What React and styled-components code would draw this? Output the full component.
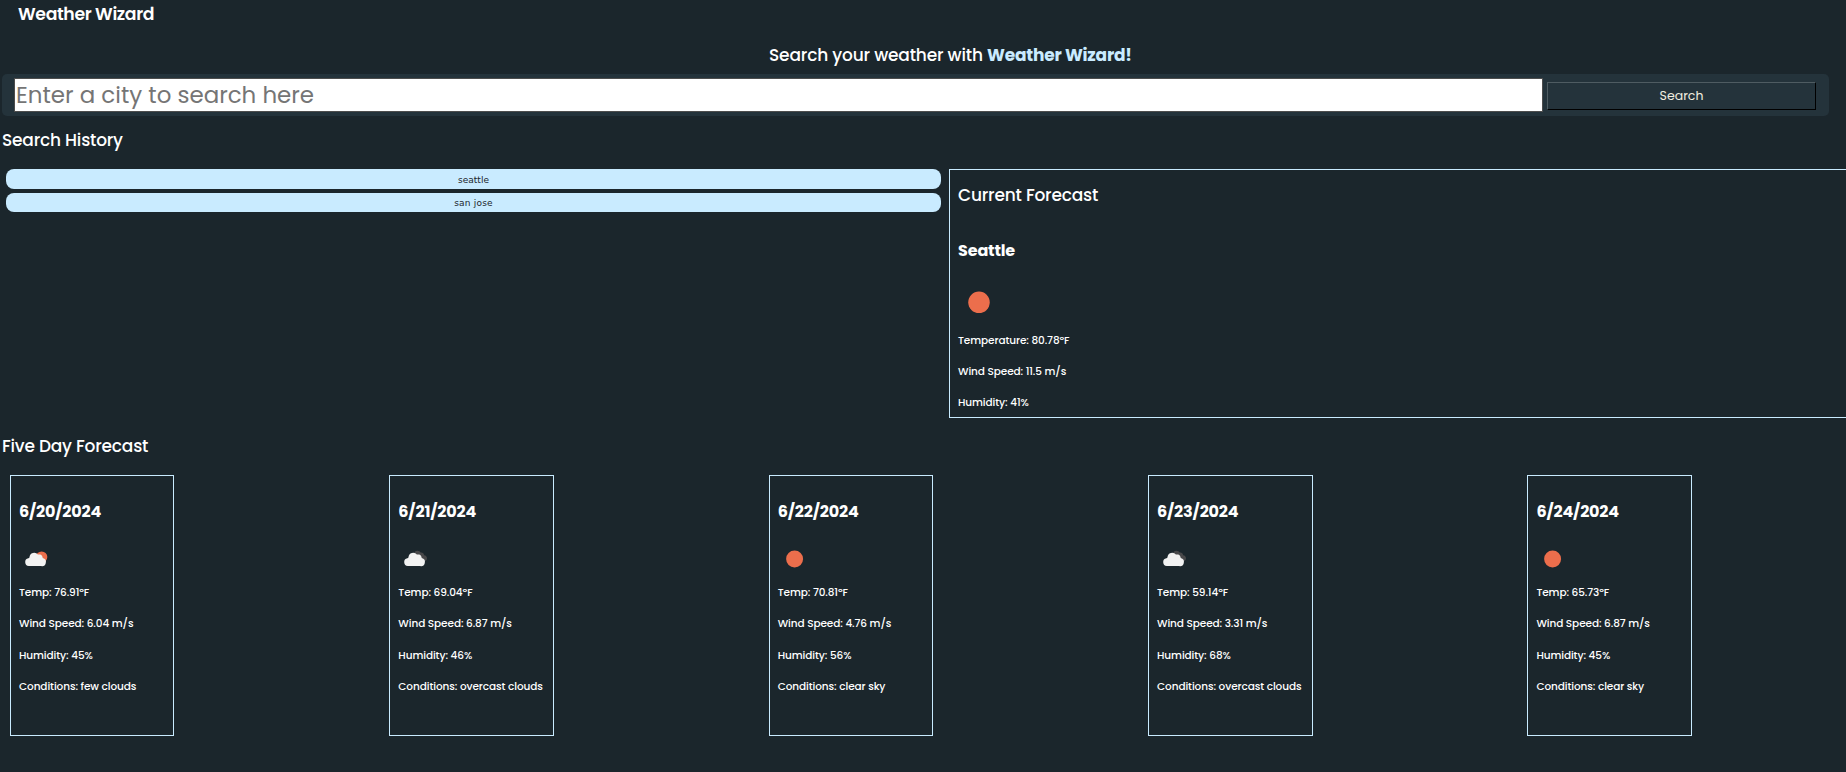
import React from "react";
import styled, { createGlobalStyle } from "styled-components";

const colors = {
  page: "#1b262c",
  bar: "#24333b",
  ice: "#c9ebff",
  text: "#ffffff",
};

const GlobalStyle = createGlobalStyle`
  * { box-sizing: border-box; }
  body {
    margin: 0;
    background: ${colors.page};
    color: ${colors.text};
    font-family: Poppins, Inter, "Open Sans", sans-serif;
    overflow: hidden;
  }
  h1, h2, h3, p { margin: 0; }
`;

const Viewport = styled.div`
  width: 100%;
  height: 772px;
  overflow: hidden;
`;

const Page = styled.main`
  width: 1898.75px;
  padding-left: 2px;
  display: flex;
  flex-direction: column;
`;

const Brand = styled.h1`
  padding-left: 16px;
  font-size: 17.3px;
  font-weight: 600;
  line-height: 28px;
  letter-spacing: -0.36px;
`;

const Tagline = styled.h2`
  margin-top: 13px;
  text-align: center;
  font-size: 17px;
  font-weight: 500;
  line-height: 28px;
  letter-spacing: -0.17px;
`;

const Accent = styled.span`
  color: ${colors.ice};
  font-weight: 700;
  letter-spacing: -0.22px;
`;

const SearchBar = styled.form`
  margin-top: 5px;
  width: 1827px;
  height: 42px;
  padding: 0 13px 0 12px;
  display: flex;
  align-items: center;
  gap: 4px;
  border-radius: 5px;
  background: ${colors.bar};
`;

const CityInput = styled.input`
  width: 1529px;
  height: 34px;
  padding: 0 1px 1px;
  border: 1px solid #4d4d4d;
  background: #fff;
  font-family: inherit;
  font-size: 22.95px;
  &::placeholder { color: #757575; opacity: 1; }
`;

const SearchButton = styled.button`
  width: 269px;
  height: 28px;
  margin-top: 2px;
  padding: 0;
  border: 1px solid;
  border-color: #4f5c62 #000 #000 #4f5c62;
  background: ${colors.bar};
  color: #f1eee0;
  font-family: inherit;
  font-size: 12.5px;
`;

const SectionTitle = styled.h2`
  font-size: 17px;
  font-weight: 500;
  line-height: 28px;
  margin-top: ${(p) => p.$top}px;
  letter-spacing: -0.2px;
`;

const Split = styled.section`
  margin-top: 15px;
  display: grid;
  grid-template-columns: 947px 1fr;
`;

const History = styled.div`
  padding: 0 8px 0 4px;
  display: flex;
  flex-direction: column;
  gap: 4px;
`;

const HistoryItem = styled.button`
  height: ${(p) => p.$height}px;
  padding: 1px 0 0;
  border: 0;
  border-radius: 8px;
  background: ${colors.ice};
  color: #1b262c;
  font-family: "DejaVu Sans", sans-serif;
  font-size: 9px;
  line-height: 18px;
  letter-spacing: ${(p) => p.$track}px;
`;

const CurrentCard = styled.article`
  height: 249px;
  padding: 11px 8px 0;
  border: 1px solid ${colors.ice};
`;

const City = styled.h3`
  margin: 28px 0 16px;
  font-size: 16px;
  font-weight: 700;
  line-height: 28px;
  letter-spacing: -0.15px;
`;

const Week = styled.section`
  margin-top: 15px;
  display: grid;
  grid-template-columns: repeat(5, 379.35px);
`;

const DayCard = styled.article`
  width: 164.47px;
  height: 261px;
  margin-left: 8px;
  padding: 22px 8px 0;
  border: 1px solid ${colors.ice};
`;

const DayDate = styled.h3`
  font-size: 16px;
  font-weight: 700;
  line-height: 28px;
  letter-spacing: -0.18px;
`;

const Readings = styled.div`
  margin-top: ${(p) => p.$top}px;
  line-height: ${(p) => p.$pitch}px;
`;

const Reading = styled.p`
  font-size: 10.5px;
  font-weight: 500;
  letter-spacing: -0.09px;
  white-space: nowrap;
`;

const Icon = styled.svg`
  display: block;
  width: ${(p) => p.$size}px;
  height: ${(p) => p.$size}px;
`;

const DayIcon = styled.div`
  margin-top: 16px;
`;

function WeatherIcon({ kind, size }) {
  const cloud = (
    <path
      fill="#f2f2f2"
      d="M9.800 24.100a4 4 0 0 1-.4-7.900c.9-.1 1-.4 1.100-1.100a4.700 4.700 0 0 1 8.400-2.500c.6-.2 1.500-.2 2.300 0 1.700.5 2.500 2 2.500 3.500a4 4 0 0 1-1.800 8z"
    />
  );
  return (
    <Icon $size={size} viewBox="0 0 34 34" aria-hidden="true">
      {kind === "clear" && <circle cx="16.6" cy="16.9" r="8.5" fill="#ec6e4c" />}
      {kind === "few" && (
        <>
          <circle cx="22.6" cy="15.1" r="5.7" fill="#ec6e4c" />
          {cloud}
        </>
      )}
      {kind === "overcast" && (
        <>
          <path
            fill="#48484a"
            d="M16 11.500c.3-1.800 1.700-2.900 3.400-2.800 1.500 0 2.600.7 3.200 1.900 1.900-.4 3.400.8 3.500 2.700 1.800.2 2.900 1.500 2.900 3 0 1.800-1.300 3-3.200 3.200z"
          />
          {cloud}
        </>
      )}
    </Icon>
  );
}

const days = [
  { date: "6/20/2024", kind: "few", temp: "76.91", wind: "6.04", humidity: 45, sky: "few clouds" },
  { date: "6/21/2024", kind: "overcast", temp: "69.04", wind: "6.87", humidity: 46, sky: "overcast clouds" },
  { date: "6/22/2024", kind: "clear", temp: "70.81", wind: "4.76", humidity: 56, sky: "clear sky" },
  { date: "6/23/2024", kind: "overcast", temp: "59.14", wind: "3.31", humidity: 68, sky: "overcast clouds" },
  { date: "6/24/2024", kind: "clear", temp: "65.73", wind: "6.87", humidity: 45, sky: "clear sky" },
];

function Day({ day }) {
  return (
    <DayCard>
      <DayDate>{day.date}</DayDate>
      <DayIcon>
        <WeatherIcon kind={day.kind} size={34} />
      </DayIcon>
      <Readings $top={0.5} $pitch={31.5}>
        <Reading>Temp: {day.temp}ºF</Reading>
        <Reading>Wind Speed: {day.wind} m/s</Reading>
        <Reading>Humidity: {day.humidity}%</Reading>
        <Reading>Conditions: {day.sky}</Reading>
      </Readings>
    </DayCard>
  );
}

export default function App() {
  return (
    <Viewport>
      <GlobalStyle />
      <Page>
        <Brand>Weather Wizard</Brand>
        <Tagline>
          Search your weather with <Accent>Weather Wizard!</Accent>
        </Tagline>
        <SearchBar onSubmit={(e) => e.preventDefault()}>
          <CityInput placeholder="Enter a city to search here" />
          <SearchButton>Search</SearchButton>
        </SearchBar>
        <SectionTitle $top={10}>Search History</SectionTitle>
        <Split>
          <History>
            <HistoryItem $height={20} $track={0}>seattle</HistoryItem>
            <HistoryItem $height={19} $track={0.2}>san jose</HistoryItem>
          </History>
          <CurrentCard>
            <SectionTitle $top={0}>Current Forecast</SectionTitle>
            <City>Seattle</City>
            <WeatherIcon kind="clear" size={43} />
            <Readings $top={1} $pitch={31}>
              <Reading>Temperature: 80.78ºF</Reading>
              <Reading>Wind Speed: 11.5 m/s</Reading>
              <Reading>Humidity: 41%</Reading>
            </Readings>
          </CurrentCard>
        </Split>
        <SectionTitle $top={14}>Five Day Forecast</SectionTitle>
        <Week>
          {days.map((day) => (
            <Day key={day.date} day={day} />
          ))}
        </Week>
      </Page>
    </Viewport>
  );
}
